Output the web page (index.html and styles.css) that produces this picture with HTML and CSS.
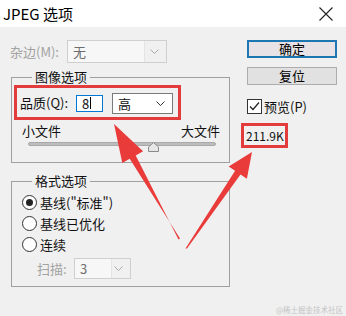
FILE: index.html
```html
<!DOCTYPE html>
<html lang="zh-CN">
<head>
    <meta charset="UTF-8">
    <title>JPEG 选项</title>
    <link rel="stylesheet" href="styles.css">
</head>
<body>
    <div class="window">
        <header class="titlebar">
            <span class="title">JPEG 选项</span>
            <svg class="close" width="14" height="14" viewBox="0 0 14 14">
                <path d="M0.5 0.5 L13.5 13.5 M13.5 0.5 L0.5 13.5" stroke="#222" stroke-width="1.1" fill="none"/>
            </svg>
        </header>

        <div class="content">
            <section class="main">
                <div class="matte-row">
                    <span class="label muted matte-label">杂边(M):</span>
                    <div class="combo disabled matte-combo">
                        <span class="field">无</span>
                        <svg class="chev" width="9" height="5" viewBox="0 0 9 5"><path d="M0.5 0.5 L4.5 4.5 L8.5 0.5" stroke="#a8a8a8" fill="none"/></svg>
                    </div>
                </div>

                <fieldset class="group image-group">
                    <legend>图像选项</legend>
                    <div class="quality mark">
                        <span class="label">品质(Q):</span>
                        <div class="num-input">8<span class="caret"></span></div>
                        <div class="combo level-combo">
                            <span class="field">高</span>
                            <svg class="chev" width="9" height="5" viewBox="0 0 9 5"><path d="M0.5 0.5 L4.5 4.5 L8.5 0.5" stroke="#333" fill="none"/></svg>
                        </div>
                    </div>
                    <div class="size-labels">
                        <span>小文件</span>
                        <span>大文件</span>
                    </div>
                    <div class="slider">
                        <div class="track"></div>
                        <svg class="thumb" width="11" height="10" viewBox="0 0 11 10">
                            <path d="M5.5 0.5 L10.5 5 L10.5 9.5 L0.5 9.5 L0.5 5 Z" fill="#e6e6e6" stroke="#8a8a8a"/>
                        </svg>
                    </div>
                </fieldset>

                <fieldset class="group format-group">
                    <legend>格式选项</legend>
                    <div class="radio-row"><span class="radio checked"></span><span>基线("标准")</span></div>
                    <div class="radio-row"><span class="radio"></span><span>基线已优化</span></div>
                    <div class="radio-row"><span class="radio"></span><span>连续</span></div>
                    <div class="scan-row">
                        <span class="label muted scan-label">扫描:</span>
                        <div class="combo disabled scan-combo">
                            <span class="field">3</span>
                            <svg class="chev" width="9" height="5" viewBox="0 0 9 5"><path d="M0.5 0.5 L4.5 4.5 L8.5 0.5" stroke="#a8a8a8" fill="none"/></svg>
                        </div>
                    </div>
                </fieldset>
            </section>

            <section class="side">
                <button class="btn primary">确定</button>
                <button class="btn">复位</button>
                <div class="preview-row">
                    <span class="checkbox">
                        <svg width="13" height="13" viewBox="0 0 13 13"><path d="M2 6.5 L5 9.5 L11 2.5" stroke="#222" stroke-width="1.2" fill="none"/></svg>
                    </span>
                    <span>预览(P)</span>
                </div>
                <div class="file-size mark">211.9K</div>
            </section>
        </div>

        <!-- annotation arrows -->
        <svg class="arrows" width="346" height="316" viewBox="0 0 346 316">
            <polygon points="178.5,239.5 180,238.5 129.7,158.8 122.3,163 114,124 143.1,151.2 135.7,155.4" fill="#ea3b3b"/>
            <polygon points="185.5,248.5 187,248.5 240.5,174.5 246.9,178.8 252,152 228.7,166.4 235.1,170.7" fill="#ea3b3b"/>
        </svg>

        <div class="watermark">@稀土掘金技术社区</div>
    </div>
</body>
</html>
```

FILE: styles.css
```css
body {
    margin: 0;
    font-family: "Noto Sans CJK SC", "Microsoft YaHei", sans-serif;
    font-size: 13px;
    color: #111;
}

.window {
    position: relative;
    width: 346px;
    height: 316px;
    background: #f0f0f0;
    overflow: hidden;
}

.titlebar {
    height: 27px;
    background: #fff;
    display: flex;
    align-items: center;
    justify-content: space-between;
    padding: 0 13px 0 3px;
}

.title {
    font-size: 15px;
    line-height: 18px;
    color: #000;
}

.content {
    display: flex;
    padding-top: 13px;
}

.main {
    margin-left: 10px;
    width: 220px;
}

.side {
    margin-left: 17px;
    width: 90px;
    display: flex;
    flex-direction: column;
}

.label {
    line-height: 17px;
}

.muted {
    color: #a2a2a2;
}

/* combo boxes */
.combo {
    display: flex;
    align-items: center;
    justify-content: space-between;
    box-sizing: border-box;
    border: 1px solid #7a7a7a;
    background: #fff;
    line-height: 17px;
}

.combo .field {
    padding-left: 5px;
}

.combo .chev {
    margin-right: 7px;
}

.combo.disabled {
    border-color: #cfcfcf;
    background: #f0f0f0;
    color: #6d6d6d;
}

.combo.disabled .field {
    align-self: stretch;
    display: flex;
    align-items: center;
    background: #f7f7f7;
    border-right: 1px solid #e4e4e4;
}

.matte-row {
    display: flex;
    align-items: center;
    height: 23px;
}

.matte-label {
    width: 57px;
}

.matte-combo {
    width: 100px;
    height: 23px;
}

.matte-combo .field {
    width: 71px;
}

/* group boxes */
.group {
    margin: 0 0 0 1px;
    min-width: 0;
    width: 219px;
    box-sizing: border-box;
    border: 1px solid #a0a0a0;
}

.group legend {
    padding: 0 3px;
    margin-left: 18px;
    line-height: 14px;
}

.image-group {
    margin-top: 7px;
    padding: 1px 9px 10px 2px;
}

.mark {
    border: 3px solid #e23c3c;
}

.quality {
    box-sizing: border-box;
    width: 167px;
    height: 35px;
    display: flex;
    align-items: center;
    padding-left: 3px;
}

.quality .label {
    width: 56px;
}

.num-input {
    box-sizing: border-box;
    width: 27px;
    height: 17px;
    border: 1px solid #0078d7;
    background: #fff;
    line-height: 15px;
    padding-left: 5px;
    display: flex;
    align-items: center;
    margin-top: 1px;
}

.caret {
    width: 1px;
    height: 12px;
    background: #000;
    margin-left: 1px;
}

.level-combo {
    width: 61px;
    height: 21px;
    margin-left: 9px;
    margin-top: 1px;
}

.size-labels {
    display: flex;
    justify-content: space-between;
    margin: 2px 0 0 8px;
    line-height: 17px;
}

.slider {
    position: relative;
    margin-left: 14px;
    width: 188px;
    height: 10px;
}

.track {
    margin-top: 3px;
    height: 4px;
    border-radius: 2px;
    background: #bdbdbd;
    border: 1px solid #a9a9a9;
    box-sizing: border-box;
}

.thumb {
    position: absolute;
    left: 120px;
    top: 0;
}

.format-group {
    margin-top: 11px;
    padding: 4px 0 7px 2px;
}

.radio-row {
    display: flex;
    align-items: center;
    height: 21px;
    margin-left: 8px;
    gap: 3px;
    line-height: 17px;
}

.radio {
    box-sizing: border-box;
    width: 15px;
    height: 15px;
    border: 1px solid #333;
    border-radius: 50%;
    background: #fff;
    display: flex;
    align-items: center;
    justify-content: center;
}

.radio.checked::after {
    content: "";
    width: 7px;
    height: 7px;
    border-radius: 50%;
    background: #222;
}

.scan-row {
    display: flex;
    align-items: center;
    margin: 3px 0 0 23px;
}

.scan-label {
    width: 37px;
}

.scan-combo {
    width: 57px;
    height: 21px;
}

.scan-combo .field {
    width: 31px;
}

/* right column */
.btn {
    box-sizing: border-box;
    width: 90px;
    height: 18px;
    padding: 0;
    font: inherit;
    line-height: 14px;
    color: #000;
    background: #e1e1e1;
    border: 1px solid #adadad;
}

.btn.primary {
    border: 2px solid #1b76b1;
    background: #e6e2e5;
}

.btn + .btn {
    margin-top: 9px;
}

.preview-row {
    display: flex;
    align-items: center;
    gap: 2px;
    margin-top: 14px;
    line-height: 15px;
}

.checkbox {
    box-sizing: border-box;
    width: 15px;
    height: 15px;
    border: 1px solid #333;
    background: #fff;
    display: flex;
}

.file-size {
    box-sizing: border-box;
    width: 47px;
    height: 25px;
    margin: 9px 0 0 -6px;
    padding-left: 2px;
    font-size: 12px;
    line-height: 19px;
}

.arrows {
    position: absolute;
    left: 0;
    top: 0;
    pointer-events: none;
}

.watermark {
    position: absolute;
    right: 3px;
    bottom: 2px;
    font-size: 7.5px;
    line-height: 9px;
    color: #c4c4c4;
}
```
